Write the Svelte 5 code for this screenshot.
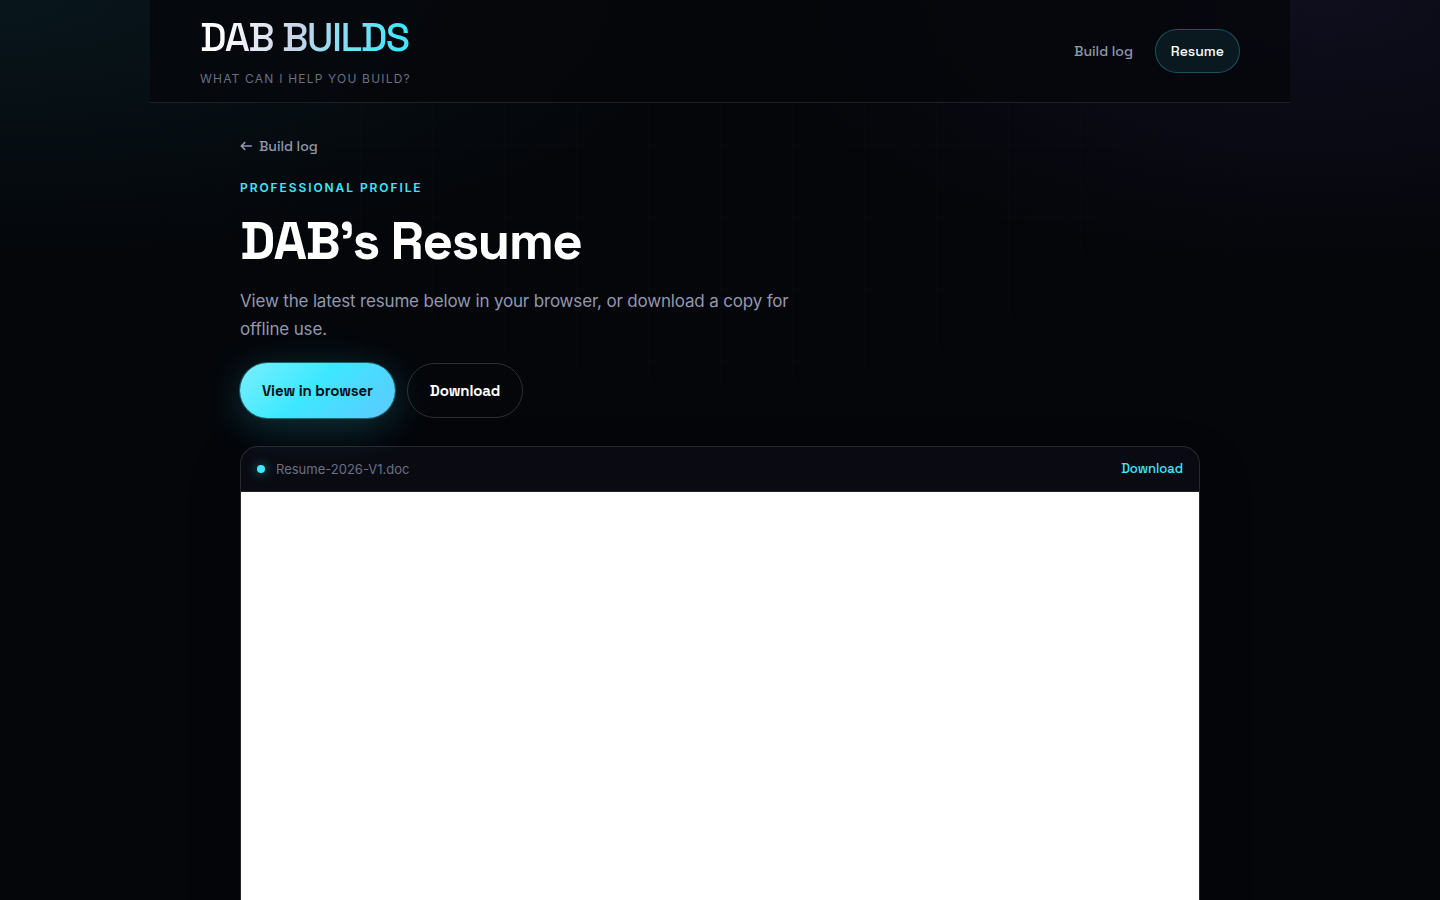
<script lang="ts">
	const file: string = 'Resume-2026-V1.doc';
	const href: string = `/${file}`;

	const nav = [
		{ label: 'Build log', href: '/', active: false },
		{ label: 'Resume', href: '/resume', active: true }
	];
</script>

<div class="page">
	<header class="site-header">
		<a class="brand" href="/">
			<span class="wordmark">DAB BUILDS</span>
			<span class="tagline">What can I help you build?</span>
		</a>
		<nav class="nav" aria-label="Main">
			{#each nav as item}
				<a class="nav-link" class:active={item.active} href={item.href} aria-current={item.active ? 'page' : undefined}>{item.label}</a>
			{/each}
		</nav>
	</header>

	<main class="content">
		<a class="back" href="/">
			<svg width="12" height="12" viewBox="0 0 12 12" fill="none" stroke="currentColor" stroke-width="1.5" aria-hidden="true">
				<path d="M11.8 6H1.4M5.2 2.1L1.3 6l3.9 3.9" />
			</svg>
			Build log
		</a>
		<p class="eyebrow">Professional profile</p>
		<h1>DAB’s Resume</h1>
		<p class="lead">View the latest resume below in your browser, or download a copy for offline use.</p>

		<div class="actions">
			<a class="btn btn-primary" href="#viewer">View in browser</a>
			<a class="btn btn-ghost" {href} download>Download</a>
		</div>

		<section class="viewer" id="viewer">
			<div class="viewer-bar">
				<span class="dot"></span>
				<span class="file-name">{file}</span>
				<a class="viewer-download" {href} download>Download</a>
			</div>
			<iframe class="viewer-frame" title="Resume"></iframe>
		</section>
	</main>
</div>

<style>
	:global(body) {
		margin: 0;
		background: #04060a;
		-webkit-font-smoothing: antialiased;
	}

	.page {
		--display: 'Space Grotesk', Inter, sans-serif;
		--accent: #3de8ff;
		--muted: #9298ad;
		--dim: #6a7083;
		--line: rgba(255, 255, 255, 0.1);

		position: relative;
		isolation: isolate;
		min-height: 100vh;
		color: #fff;
		font-family: Inter, sans-serif;
		background:
			radial-gradient(ellipse 720px 260px at 0 0, rgba(61, 232, 255, 0.07), transparent),
			radial-gradient(ellipse 580px 270px at 92% 0, rgba(139, 108, 255, 0.08), transparent),
			#04060a;
	}

	/* faint grid, fading out towards the edges */
	.page::before {
		content: '';
		position: absolute;
		inset: 0;
		z-index: -1;
		height: 100vh;
		background-image:
			linear-gradient(rgba(255, 255, 255, 0.01) 1px, transparent 1px),
			linear-gradient(90deg, rgba(255, 255, 255, 0.01) 1px, transparent 1px);
		background-size: 72px 72px;
		mask-image: radial-gradient(ellipse 70% 60% at 50% 20%, #000 30%, transparent 80%);
	}

	a {
		color: inherit;
		text-decoration: none;
	}

	.site-header {
		box-sizing: border-box;
		display: flex;
		align-items: flex-start;
		justify-content: space-between;
		max-width: 1140px;
		margin: 0 auto;
		padding: 17px 50px 14px;
		border-bottom: 1px solid var(--line);
		background: rgba(5, 6, 11, 0.76);
	}

	.brand {
		display: flex;
		flex-direction: column;
		gap: 11px;
	}

	.wordmark {
		font-family: var(--display);
		font-size: 40px;
		font-weight: 500;
		line-height: 42px;
		letter-spacing: -0.04em;
		color: transparent;
		background: linear-gradient(105deg, #fff 10%, #c9d4e6 45%, var(--accent) 92%);
		background-clip: text;
	}

	.tagline {
		font-size: 12px;
		line-height: 18px;
		letter-spacing: 0.1em;
		text-transform: uppercase;
		color: var(--dim);
	}

	.nav {
		display: flex;
		gap: 6px;
		margin-top: 12px;
	}

	.nav-link {
		padding: 0 15px;
		border: 1px solid transparent;
		border-radius: 999px;
		font-family: var(--display);
		font-size: 14px;
		font-weight: 500;
		line-height: 42px;
		color: var(--muted);
	}

	.nav-link.active {
		border-color: rgba(61, 232, 255, 0.28);
		background: rgba(61, 232, 255, 0.08);
		color: #fff;
	}

	.content {
		max-width: 960px;
		margin: 0 auto;
		padding: 32px 40px 80px;
	}

	.back {
		display: inline-flex;
		align-items: center;
		gap: 7px;
		font-family: var(--display);
		font-size: 14px;
		font-weight: 500;
		line-height: 22px;
		color: var(--muted);
	}

	.eyebrow {
		margin: 21px 0 13px;
		font-size: 12px;
		font-weight: 600;
		line-height: 20px;
		letter-spacing: 0.16em;
		text-transform: uppercase;
		color: var(--accent);
	}

	h1 {
		margin: 0 0 16px;
		font-family: var(--display);
		font-size: 53px;
		font-weight: 600;
		line-height: 60px;
		letter-spacing: -0.03em;
	}

	.lead {
		max-width: 560px;
		margin: 0 0 20px;
		font-size: 17px;
		line-height: 28px;
		letter-spacing: -0.01em;
		color: var(--muted);
	}

	.actions {
		display: flex;
		flex-wrap: wrap;
		gap: 12px;
		margin-bottom: 28px;
	}

	.btn {
		padding: 0 22px;
		border: 1px solid transparent;
		border-radius: 999px;
		font-family: var(--display);
		font-size: 15px;
		font-weight: 600;
		line-height: 53px;
		letter-spacing: -0.01em;
	}

	.btn-primary {
		border: 0;
		line-height: 55px;
		color: #031018;
		background: linear-gradient(135deg, #7af0ff 0%, var(--accent) 45%, #5ec8ff 100%);
		box-shadow:
			0 0 0 1px rgba(61, 232, 255, 0.35),
			0 8px 40px rgba(61, 232, 255, 0.22);
	}

	.btn-ghost {
		border-color: rgba(255, 255, 255, 0.16);
	}

	.viewer {
		overflow: hidden;
		border: 1px solid rgba(255, 255, 255, 0.13);
		border-radius: 18px;
		background: rgba(12, 13, 20, 0.8);
		box-shadow: 0 24px 48px rgba(0, 0, 0, 0.35);
	}

	.viewer-bar {
		display: flex;
		align-items: center;
		gap: 11px;
		padding: 0 16px;
		border-bottom: 1px solid var(--line);
		font-size: 13px;
		line-height: 44px;
	}

	.dot {
		width: 8px;
		height: 8px;
		border-radius: 50%;
		background: var(--accent);
		box-shadow: 0 0 12px rgba(61, 232, 255, 0.6);
	}

	.file-name {
		flex: 1;
		color: var(--dim);
	}

	.viewer-download {
		font-family: var(--display);
		font-weight: 500;
		color: var(--accent);
	}

	.viewer-frame {
		display: block;
		width: 100%;
		height: 80vh;
		border: 0;
		background: #fff;
	}
</style>
